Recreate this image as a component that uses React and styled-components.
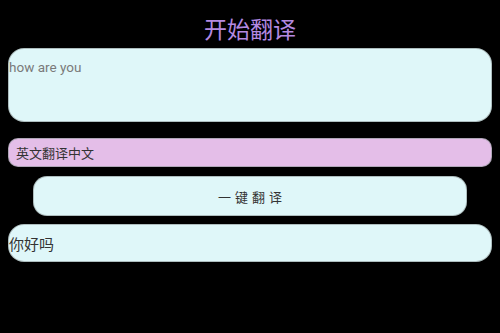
import React from "react";
import styled, { createGlobalStyle } from "styled-components";

const GlobalStyle = createGlobalStyle`
  html, body {
    margin: 0;
    padding: 0;
    background: #000;
  }
  body {
    font-family: Roboto, "Noto Sans CJK SC", sans-serif;
  }
`;

const Page = styled.div`
  width: 500px;
  height: 333px;
  background: #000;
  padding: 0 8px;
  box-sizing: border-box;
  display: flex;
  flex-direction: column;
`;

const Title = styled.div`
  height: 48px;
  padding-top: 13px;
  box-sizing: border-box;
  text-align: center;
  font-size: 23px;
  line-height: 30px;
  color: #b48ae2;
  font-family: "Noto Sans CJK SC", sans-serif;
`;

const Box = styled.div`
  box-sizing: border-box;
  background: #dff7f9;
  border: 1px solid rgba(140, 150, 150, 0.6);
  border-radius: ${(p) => p.radius || 16}px;
  height: ${(p) => p.h}px;
  margin-top: ${(p) => p.mt || 0}px;
  margin-left: ${(p) => p.inset || 0}px;
  margin-right: ${(p) => p.inset || 0}px;
  display: flex;
`;

const SourceText = styled.div`
  font-family: Roboto, sans-serif;
  font-size: 13.5px;
  color: #7a7a7a;
  line-height: 16px;
  padding-top: 10px;
`;

const LangBar = styled(Box)`
  background: #e4bee8;
  align-items: center;
  padding-left: 7px;
  font-size: 13px;
  color: #333;
  font-family: "Noto Sans CJK SC", sans-serif;
`;

const TranslateButton = styled(Box)`
  align-items: center;
  justify-content: center;
  padding-left: 4px;
  font-size: 13px;
  letter-spacing: 4px;
  color: #333;
  font-family: "Noto Sans CJK SC", sans-serif;
`;

const Result = styled(Box)`
  align-items: center;
  font-size: 15px;
  color: #333;
  font-family: "Noto Sans CJK SC", sans-serif;
`;

export default function App() {
  return (
    <>
      <GlobalStyle />
      <Page>
        <Title>开始翻译</Title>
        <Box h={74}>
          <SourceText>how are you</SourceText>
        </Box>
        <LangBar h={29} mt={16} radius={10}>
          英文翻译中文
        </LangBar>
        <TranslateButton h={40} mt={9} inset={25} radius={14}>
          一键翻译
        </TranslateButton>
        <Result h={38} mt={8}>
          你好吗
        </Result>
      </Page>
    </>
  );
}
